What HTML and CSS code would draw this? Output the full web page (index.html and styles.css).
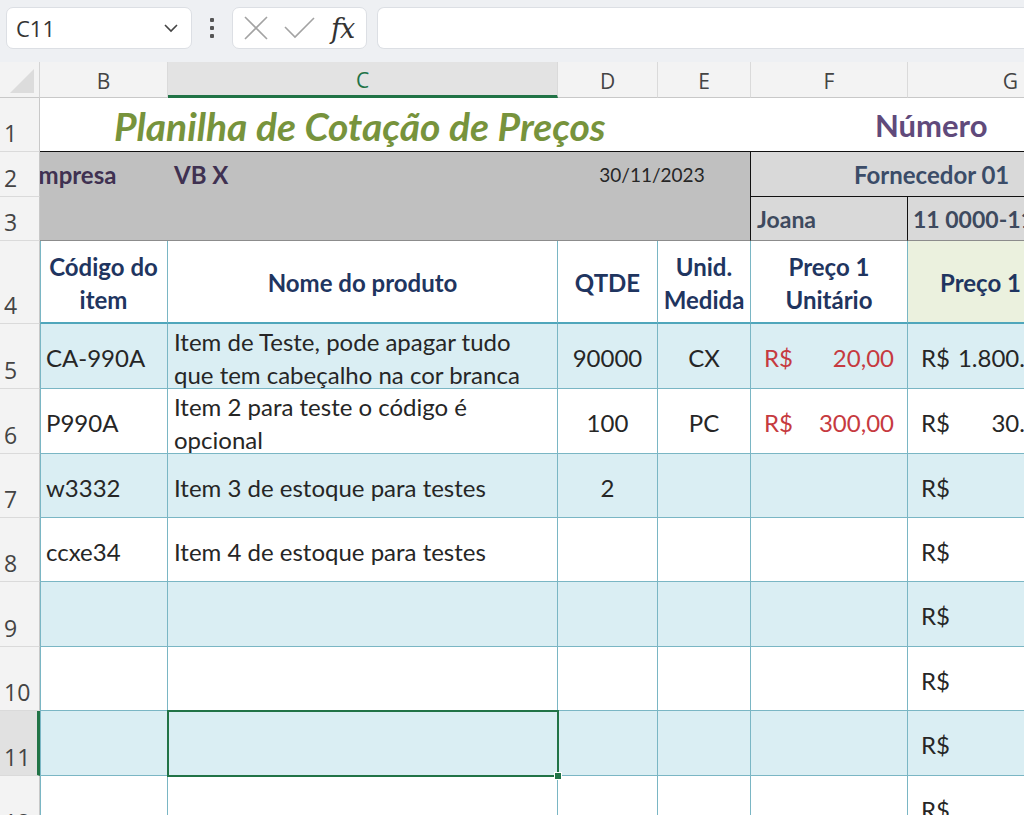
FILE: index.html
```html
<!DOCTYPE html>
<html lang="pt">
<head>
<meta charset="utf-8">
<title>Planilha de Cotação de Preços</title>
<link rel="stylesheet" href="styles.css">
</head>
<body>
<div class="app">
  <div class="fbar">
    <div class="namebox">
      <span class="ref">C11</span>
      <svg class="chev" width="16" height="10" viewBox="0 0 16 10"><path d="M2 2 L8 8 L14 2" fill="none" stroke="#444" stroke-width="1.6"/></svg>
    </div>
    <div class="kebab"><i></i><i></i><i></i></div>
    <div class="fxbox">
      <svg class="ico" width="24" height="24" viewBox="0 0 24 24"><path d="M1 1 L23 23 M23 1 L1 23" fill="none" stroke="#a3a3a3" stroke-width="1.6"/></svg>
      <svg class="ico chk" width="32" height="24" viewBox="0 0 32 24"><path d="M1 11 L11 21 L30 2" fill="none" stroke="#a3a3a3" stroke-width="1.6"/></svg>
      <span class="fx">fx</span>
    </div>
    <div class="finput"></div>
  </div>

  <div class="sheet">
    <!-- column headers -->
    <div class="corner"><span class="tri"></span></div>
    <div class="ch">B</div>
    <div class="ch sel">C</div>
    <div class="ch">D</div>
    <div class="ch">E</div>
    <div class="ch">F</div>
    <div class="ch">G</div>
    <div class="ch">H</div>

    <!-- row 1 -->
    <div class="rh">1</div>
    <div class="title">Planilha de Cotação de Preços</div>
    <div class="numero">Número</div>

    <!-- row 2 -->
    <div class="rh">2</div>
    <div class="gr b2"><span class="clip">Empresa</span></div>
    <div class="gr c2">VB X</div>
    <div class="gr d2">30/11/2023</div>
    <div class="forn">Fornecedor 01</div>

    <!-- row 3 -->
    <div class="rh">3</div>
    <div class="gr b3"></div>
    <div class="f3">Joana</div>
    <div class="g3">11 0000-1111</div>

    <!-- row 4 -->
    <div class="rh">4</div>
    <div class="c hd first">Código do<br>item</div>
    <div class="c hd">Nome do produto</div>
    <div class="c hd">QTDE</div>
    <div class="c hd">Unid.<br>Medida</div>
    <div class="c hd">Preço 1<br>Unitário</div>
    <div class="c hd tot"><span class="totl">Preço 1</span></div>
    <div class="c hd tot"></div>

    <!-- row 5 -->
    <div class="rh">5</div>
    <div class="c alt first">CA-990A</div>
    <div class="c alt two">Item de Teste, pode apagar tudo<br>que tem cabeçalho na cor branca</div>
    <div class="c alt mid">90000</div>
    <div class="c alt mid">CX</div>
    <div class="c alt acc red"><span>R$</span><span>20,00</span></div>
    <div class="c alt acc"><span>R$</span><span>1.800.000,00</span></div>
    <div class="c alt"></div>

    <!-- row 6 -->
    <div class="rh">6</div>
    <div class="c first">P990A</div>
    <div class="c two">Item 2 para teste o código é<br>opcional</div>
    <div class="c mid">100</div>
    <div class="c mid">PC</div>
    <div class="c acc red"><span>R$</span><span>300,00</span></div>
    <div class="c acc"><span>R$</span><span>30.000,00</span></div>
    <div class="c"></div>

    <!-- row 7 -->
    <div class="rh">7</div>
    <div class="c alt first">w3332</div>
    <div class="c alt">Item 3 de estoque para testes</div>
    <div class="c alt mid">2</div>
    <div class="c alt"></div>
    <div class="c alt"></div>
    <div class="c alt acc"><span>R$</span><span></span></div>
    <div class="c alt"></div>

    <!-- row 8 -->
    <div class="rh">8</div>
    <div class="c first">ccxe34</div>
    <div class="c">Item 4 de estoque para testes</div>
    <div class="c"></div>
    <div class="c"></div>
    <div class="c"></div>
    <div class="c acc"><span>R$</span><span></span></div>
    <div class="c"></div>

    <!-- row 9 -->
    <div class="rh">9</div>
    <div class="c alt first"></div>
    <div class="c alt"></div>
    <div class="c alt"></div>
    <div class="c alt"></div>
    <div class="c alt"></div>
    <div class="c alt acc"><span>R$</span><span></span></div>
    <div class="c alt"></div>

    <!-- row 10 -->
    <div class="rh">10</div>
    <div class="c first"></div>
    <div class="c"></div>
    <div class="c"></div>
    <div class="c"></div>
    <div class="c"></div>
    <div class="c acc"><span>R$</span><span></span></div>
    <div class="c"></div>

    <!-- row 11 -->
    <div class="rh selr">11</div>
    <div class="c alt first"></div>
    <div class="c alt active"><span class="handle"></span></div>
    <div class="c alt"></div>
    <div class="c alt"></div>
    <div class="c alt"></div>
    <div class="c alt acc"><span>R$</span><span></span></div>
    <div class="c alt"></div>

    <!-- row 12 -->
    <div class="rh">12</div>
    <div class="c first"></div>
    <div class="c"></div>
    <div class="c"></div>
    <div class="c"></div>
    <div class="c"></div>
    <div class="c acc"><span>R$</span><span></span></div>
    <div class="c"></div>
  </div>
</div>
</body>
</html>
```

FILE: styles.css
```css
* { box-sizing: border-box; }
html, body { margin: 0; padding: 0; }
body {
  width: 1024px;
  height: 815px;
  overflow: hidden;
  background: #ffffff;
  font-family: Lato, "Open Sans", sans-serif;
  color: #262626;
}
.app { width: 1024px; overflow: hidden; }

/* ---------- formula bar ---------- */
.fbar {
  height: 62px;
  background: #eef0f3;
  display: flex;
  align-items: flex-start;
  padding: 7px 0 0 6px;
}
.namebox {
  width: 186px;
  height: 42px;
  background: #fff;
  border: 1px solid #dcdfe4;
  border-radius: 7px;
  display: flex;
  align-items: center;
  justify-content: space-between;
  padding: 0 12px 0 9px;
}
.ref { font-family: "Open Sans", sans-serif; font-size: 22px; color: #333; }
.kebab {
  width: 40px;
  height: 42px;
  display: flex;
  flex-direction: column;
  align-items: center;
  justify-content: center;
  gap: 4px;
}
.kebab i { display: block; width: 4px; height: 4px; background: #555; border-radius: 1px; }
.fxbox {
  width: 135px;
  height: 42px;
  background: #fff;
  border: 1px solid #dcdfe4;
  border-radius: 7px;
  display: flex;
  align-items: center;
  padding: 0 0 0 11px;
}
.fxbox .chk { margin-left: 16px; }
.fx {
  margin-left: 15px;
  font-family: "DejaVu Serif", "Liberation Serif", serif;
  font-style: italic;
  font-size: 27px;
  color: #333;
  letter-spacing: -1px;
}
.finput {
  flex: 1;
  margin-left: 10px;
  height: 42px;
  background: #fff;
  border: 1px solid #dcdfe4;
  border-right: none;
  border-radius: 7px 0 0 7px;
}

/* ---------- sheet grid ---------- */
.sheet {
  display: grid;
  grid-template-columns: 40px 128px 390px 100px 93px 157px 206px 200px;
  grid-template-rows: 36px 54px 45px 44px 83px 65px 65px 64px 64px 65px 64px 65px 65px;
  width: 1314px;
}
.corner {
  background: #f3f3f3;
  border-right: 1px solid #d4d4d4;
  border-bottom: 1px solid #c8c8c8;
  position: relative;
}
.tri {
  position: absolute;
  right: 5px;
  bottom: 4px;
  width: 0; height: 0;
  border-left: 24px solid transparent;
  border-bottom: 24px solid #dcdcdc;
}
.ch {
  background: #f3f3f3;
  border-right: 1px solid #dadada;
  border-bottom: 1px solid #c8c8c8;
  display: flex;
  align-items: center;
  justify-content: center;
  font-family: "Open Sans", sans-serif;
  font-size: 21px;
  color: #444;
  padding-top: 2px;
}
.ch.sel {
  background: #e3e3e3;
  color: #217346;
  border-bottom: 3px solid #217346;
}
.rh {
  background: #f3f3f3;
  border-right: 1px solid #c8c8c8;
  border-bottom: 1px solid #dadada;
  display: flex;
  align-items: flex-end;
  padding: 0 0 2px 4px;
  font-family: "Open Sans", sans-serif;
  font-size: 23px;
  color: #444;
}
.rh.selr {
  background: #e1e1e1;
  border-right: 3px solid #217346;
}

/* row 1 */
.title {
  grid-column: 2 / 6;
  border-bottom: 1px solid #111;
  display: flex;
  align-items: center;
  padding: 2px 0 0 74px;
  font-weight: 700;
  font-style: italic;
  font-size: 39px;
  color: #77933c;
  white-space: nowrap;
}
.numero {
  grid-column: 6 / 9;
  border-bottom: 1px solid #111;
  display: flex;
  align-items: center;
  padding: 0 0 0 124px;
  font-weight: 700;
  font-size: 31px;
  color: #604a7b;
}

/* rows 2-3 */
.gr {
  background: #c0c0c0;
  display: flex;
  align-items: center;
  font-size: 21px;
}
.b2, .c2 { font-weight: 700; color: #3f3151; font-size: 24px; }
.b2 { overflow: hidden; white-space: nowrap; }
.clip { margin-left: -15px; }
.c2 { padding-left: 6px; }
.d2 {
  grid-column: 4 / 6;
  justify-content: center;
  padding-right: 4px;
  font-size: 19px;
  border-right: 1px solid #111;
}
.b3 {
  grid-column: 2 / 6;
  border-right: 1px solid #111;
  border-bottom: 1px solid #8c8c8c;
}
.forn {
  grid-column: 6 / 9;
  background: #d9d9d9;
  border-bottom: 1px solid #111;
  display: flex;
  align-items: center;
  padding: 0 0 0 103px;
  font-weight: 700;
  font-size: 24px;
  color: #3b4c68;
}
.f3, .g3 {
  background: #d9d9d9;
  border-bottom: 1px solid #8c8c8c;
  display: flex;
  align-items: center;
  font-weight: 700;
  font-size: 23px;
  color: #3e4a5e;
}
.f3 { padding-left: 6px; border-right: 1px solid #111; }
.g3 { grid-column: 7 / 9; padding-left: 5px; white-space: nowrap; }

/* data cells */
.c {
  border-right: 1px solid #7ab6c4;
  border-bottom: 1px solid #7ab6c4;
  display: flex;
  align-items: center;
  padding: 3px 6px 0;
  font-size: 24px;
  color: #262626;
  white-space: nowrap;
  overflow: hidden;
  position: relative;
}
.c.first { border-left: 1px solid #7ab6c4; padding-left: 5px; }
.c.alt { background: #daeef3; }
.c.mid { justify-content: center; }
.c.two { line-height: 33px; white-space: normal; padding-top: 4px; }
.c.hd {
  justify-content: center;
  text-align: center;
  font-weight: 700;
  color: #1f3560;
  line-height: 33px;
  padding-top: 2px;
  border-bottom: 2px solid #4fa6bb;
}
.c.tot { background: #ebf1de; justify-content: flex-start; }
.totl { padding-left: 26px; }
.c.acc { justify-content: space-between; padding: 3px 13px 0 13px; }
.c.red { color: #c63a3f; }
.c.active {
  overflow: visible;
  outline: 2px solid #217346;
  outline-offset: -1px;
  z-index: 2;
}
.handle {
  position: absolute;
  right: -5px;
  bottom: -5px;
  width: 8px;
  height: 8px;
  background: #217346;
  border: 1px solid #fff;
}
```
